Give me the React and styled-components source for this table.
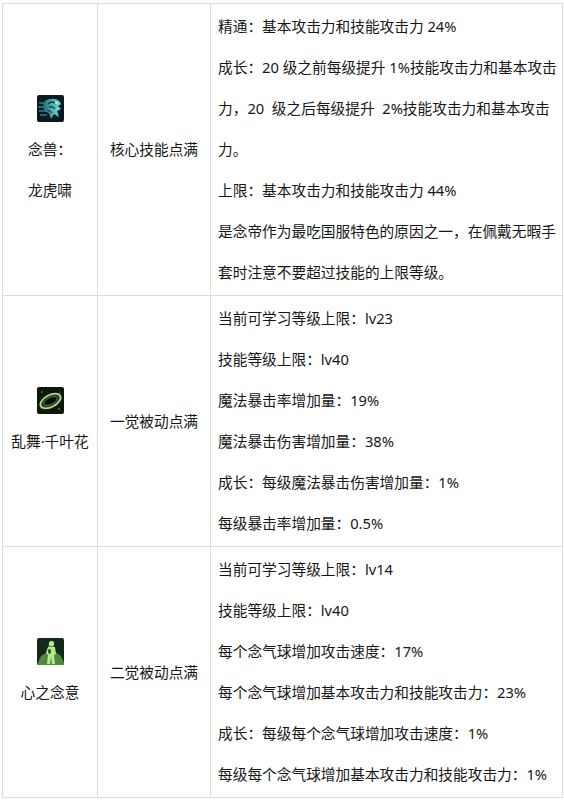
import React from 'react';
import styled, { createGlobalStyle } from 'styled-components';

const Global = createGlobalStyle`
  html, body {
    margin: 0;
    padding: 0;
    background: #fff;
  }
  body {
    font-family: "Noto Sans", "Noto Sans CJK SC", sans-serif;
    color: #161616;
  }
`;

const Page = styled.div`
  padding: 3px 0 0 2px;
`;

const Table = styled.table`
  border-collapse: collapse;
  width: 560px;
  table-layout: fixed;
  font-size: 14.7px;
`;

const Row = styled.tr`
  height: ${p => p.h}px;
`;

const Cell = styled.td`
  border: 1px solid #dcdcdc;
  vertical-align: middle;
  text-align: ${p => (p.center ? 'center' : 'left')};
  padding: ${p => (p.center ? '0' : '2px 7px')};
  line-height: 41px;
`;

const Name = styled.div`
  display: flex;
  flex-direction: column;
  align-items: center;
  line-height: 41px;
`;

const IconLine = styled.div`
  height: 41px;
  display: flex;
  align-items: center;
  justify-content: center;
`;

const Para = styled.p`
  margin: 0;
  line-height: 41px;
  white-space: pre;
`;

const TigerIcon = () => (
  <svg width="27" height="27" viewBox="0 0 27 27">
    <defs>
      <linearGradient id="tg" x1="0" y1="0" x2="1" y2="0">
        <stop offset="0" stopColor="#1f6f7c" />
        <stop offset="1" stopColor="#7ee6e6" />
      </linearGradient>
    </defs>
    <rect width="27" height="27" rx="2" fill="#0b1a20" />
    <path d="M2 8 L11 8 M1 12 L10 12 M2 16 L11 16 M3 20 L10 20" stroke="#2a7f8c" strokeWidth="1.3" />
    <path d="M7 7 C11 3 18 3 22 6 L24 9 L21 11 L24 14 L20 16 L22 22 L17 19 L14 24 L12 18 C7 17 5 12 7 7 Z" fill="url(#tg)" />
    <path d="M11 9 C14 6 17 7 19 9 M12 12 C15 11 17 12 18 14 M10 15 C12 16 14 16 15 18" stroke="#0d3a44" strokeWidth="1.2" fill="none" />
    <circle cx="19" cy="8" r="1.1" fill="#eaffff" />
  </svg>
);

const RingIcon = () => (
  <svg width="27" height="27" viewBox="0 0 27 27">
    <rect width="27" height="27" rx="2" fill="#0f170d" />
    <ellipse cx="13.5" cy="14" rx="11" ry="6" transform="rotate(-28 13.5 14)" fill="#243320" stroke="#a9dc8c" strokeWidth="1.8" />
    <ellipse cx="13.5" cy="14" rx="7.5" ry="3.4" transform="rotate(-28 13.5 14)" fill="#060a05" stroke="#5d8f4a" strokeWidth="0.8" />
    <circle cx="5" cy="5" r="0.8" fill="#7fb46a" />
    <circle cx="22" cy="22" r="0.8" fill="#7fb46a" />
    <circle cx="23" cy="6" r="0.6" fill="#7fb46a" />
    <circle cx="4" cy="21" r="0.6" fill="#7fb46a" />
  </svg>
);

const FigureIcon = () => (
  <svg width="27" height="27" viewBox="0 0 27 27">
    <rect width="27" height="27" rx="2" fill="#15291a" />
    <path d="M0 27 L4 18 L9 15 L13 3 L16 3 L18 14 L23 17 L27 24 L27 27 Z" fill="#4d8a3d" />
    <circle cx="14.5" cy="5.5" r="2.6" fill="#b5ea8a" />
    <path d="M11 9 L18 9 L19 16 L17 17 L18 26 L15 26 L14 19 L13 26 L10 26 L11 17 L9 15 Z" fill="#b5ea8a" />
    <ellipse cx="12.5" cy="13.5" rx="1.6" ry="2.4" fill="#2a5a2a" />
  </svg>
);

// each entry is a paragraph; inner arrays are the wrapped lines as shown
const rows = [
  {
    h: 292,
    icon: <TigerIcon />,
    name: ['念兽：', '龙虎啸'],
    req: '核心技能点满',
    lines: [
      ['精通：基本攻击力和技能攻击力 24%'],
      ['成长：20 级之前每级提升 1%技能攻击力和基本攻击', '力，20  级之后每级提升  2%技能攻击力和基本攻击', '力。'],
      ['上限：基本攻击力和技能攻击力 44%'],
      ['是念帝作为最吃国服特色的原因之一，在佩戴无暇手', '套时注意不要超过技能的上限等级。'],
    ],
  },
  {
    h: 250,
    icon: <RingIcon />,
    name: ['乱舞·千叶花'],
    req: '一觉被动点满',
    lines: [
      ['当前可学习等级上限：lv23'],
      ['技能等级上限：lv40'],
      ['魔法暴击率增加量：19%'],
      ['魔法暴击伤害增加量：38%'],
      ['成长：每级魔法暴击伤害增加量：1%'],
      ['每级暴击率增加量：0.5%'],
    ],
  },
  {
    h: 250,
    icon: <FigureIcon />,
    name: ['心之念意'],
    req: '二觉被动点满',
    lines: [
      ['当前可学习等级上限：lv14'],
      ['技能等级上限：lv40'],
      ['每个念气球增加攻击速度：17%'],
      ['每个念气球增加基本攻击力和技能攻击力：23%'],
      ['成长：每级每个念气球增加攻击速度：1%'],
      ['每级每个念气球增加基本攻击力和技能攻击力：1%'],
    ],
  },
];

export default function App() {
  return (
    <Page>
      <Global />
      <Table>
        <colgroup>
          <col style={{ width: 95 }} />
          <col style={{ width: 113 }} />
          <col style={{ width: 352 }} />
        </colgroup>
        <tbody>
          {rows.map((r, i) => (
            <Row key={i} h={r.h}>
              <Cell center>
                <Name>
                  <IconLine>{r.icon}</IconLine>
                  {r.name.map(n => (
                    <span key={n}>{n}</span>
                  ))}
                </Name>
              </Cell>
              <Cell center>{r.req}</Cell>
              <Cell>
                {r.lines.map((segs, j) => (
                  <Para key={j}>
                    {segs.map((s, k) => (
                      <React.Fragment key={k}>
                        {k > 0 && <br />}
                        {s}
                      </React.Fragment>
                    ))}
                  </Para>
                ))}
              </Cell>
            </Row>
          ))}
        </tbody>
      </Table>
    </Page>
  );
}
